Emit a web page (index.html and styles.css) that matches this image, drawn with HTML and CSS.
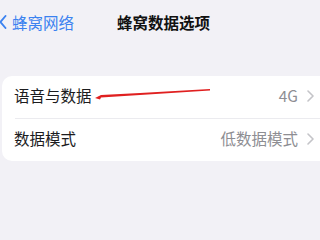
FILE: index.html
```html
<!DOCTYPE html>
<html>
<head>
<meta charset="utf-8">
<link rel="stylesheet" href="styles.css">
</head>
<body>
<div class="page">
  <div class="nav">
    <div class="back">
      <svg class="chev-back" width="8" height="14" viewBox="0 0 8 14"><path d="M6.5 1 L1.5 7 L6.5 13" fill="none" stroke="#3b82f0" stroke-width="1.9" stroke-linecap="round" stroke-linejoin="round"/></svg>
      <span>蜂窝网络</span>
    </div>
    <div class="title">蜂窝数据选项</div>
  </div>
  <div class="card">
    <div class="row">
      <span class="label">语音与数据</span>
      <span class="value">4G</span>
      <svg class="chev" width="7" height="12" viewBox="0 0 7 12"><path d="M1 1 L6 6 L1 11" fill="none" stroke="#c4c4c8" stroke-width="1.6" stroke-linecap="round" stroke-linejoin="round"/></svg>
    </div>
    <div class="sep"></div>
    <div class="row">
      <span class="label">数据模式</span>
      <span class="value">低数据模式</span>
      <svg class="chev" width="7" height="12" viewBox="0 0 7 12"><path d="M1 1 L6 6 L1 11" fill="none" stroke="#c4c4c8" stroke-width="1.6" stroke-linecap="round" stroke-linejoin="round"/></svg>
    </div>
  </div>
  <svg class="arrow" width="320" height="240" viewBox="0 0 320 240"><path d="M95 98 L101 95 L140 93 L210 89 L210 90.5 L140 95 L101 97.5 L100 99.5 Z" fill="#e02020"/></svg>
</div>
</body>
</html>
```
FILE: styles.css
```css
html, body {
  margin: 0;
  padding: 0;
}
body {
  background: #f2f1f6;
  font-family: "Noto Sans CJK SC", "Noto Sans", sans-serif;
  width: 320px;
  height: 240px;
  overflow: hidden;
}
.page {
  position: relative;
  width: 320px;
  height: 240px;
}
.nav {
  height: 44px;
  display: flex;
  align-items: center;
  position: relative;
}
.back {
  display: flex;
  align-items: center;
  gap: 5px;
  margin-left: -1px;
  color: #3b82f0;
  font-size: 15.5px;
}
.title {
  position: absolute;
  left: 117px;
  top: 0;
  height: 44px;
  line-height: 44px;
  font-size: 15.5px;
  font-weight: 600;
  color: #111;
}
.card {
  margin: 32px 0 0 2px;
  background: #fff;
  border-radius: 10px 0 0 10px;
  width: 330px;
}
.row {
  box-sizing: border-box;
  height: 42px;
  display: flex;
  align-items: center;
  padding-left: 12px;
  padding-right: 6px;
  padding-bottom: 4px;
  width: 318px;
  font-size: 15.5px;
}
.label {
  color: #1c1c1e;
  flex: 1;
}
.value {
  color: #8e8e93;
  margin-right: 9px;
}
.chev {
  display: block;
  margin-top: 1px;
}
.sep {
  height: 1px;
  background: #ebebef;
  margin-left: 13px;
}
.arrow {
  position: absolute;
  left: 0;
  top: 0;
  pointer-events: none;
}
```
